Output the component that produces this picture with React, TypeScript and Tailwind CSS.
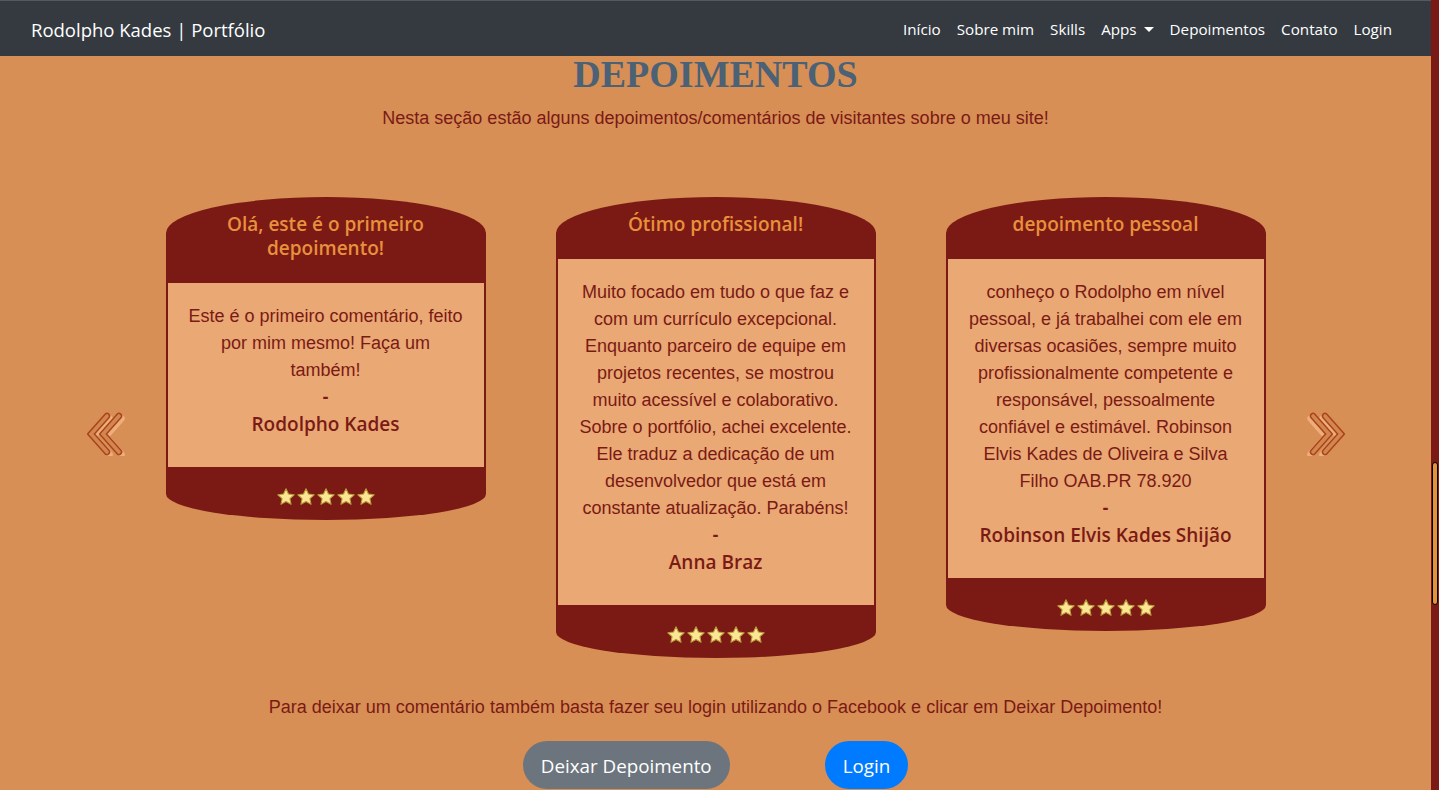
import React from "react";

const Depoimentos = [
  {
    title: "Olá, este é o primeiro depoimento!",
    text: "Este é o primeiro comentário, feito por mim mesmo! Faça um também!",
    author: "Rodolpho Kades",
  },
  {
    title: "Ótimo profissional!",
    text: "Muito focado em tudo o que faz e com um currículo excepcional. Enquanto parceiro de equipe em projetos recentes, se mostrou muito acessível e colaborativo. Sobre o portfólio, achei excelente. Ele traduz a dedicação de um desenvolvedor que está em constante atualização. Parabéns!",
    author: "Anna Braz",
  },
  {
    title: "depoimento pessoal",
    text: "conheço o Rodolpho em nível pessoal, e já trabalhei com ele em diversas ocasiões, sempre muito profissionalmente competente e responsável, pessoalmente confiável e estimável. Robinson Elvis Kades de Oliveira e Silva Filho OAB.PR 78.920",
    author: "Robinson Elvis Kades Shijão",
  },
];

const links = ["Início", "Sobre mim", "Skills", "Apps", "Depoimentos", "Contato", "Login"];

const Star = () => (
  <svg viewBox="0 0 24 24" className="w-5 h-5">
    <path
      d="M12 2.2l2.95 6.3 6.85.8-5.1 4.7 1.35 6.8L12 17.4l-6.05 3.4 1.35-6.8-5.1-4.7 6.85-.8z"
      fill="#fbe793"
      stroke="#b99a3a"
      strokeWidth="1.3"
      strokeLinejoin="round"
    />
  </svg>
);

// double chevron drawn as outlined strokes with a light shadow
const Chevrons = ({ flip }: { flip?: boolean }) => {
  const lines = ["20,4 4,22 20,40", "32,4 16,22 32,40"];
  return (
    <svg
      viewBox="0 0 44 44"
      className={flip ? "w-11 h-11 mt-3 -scale-x-100" : "w-11 h-11 mt-3"}
    >
      <g transform="translate(2.5 2.5)">
        {lines.map((p) => (
          <polyline key={p} points={p} fill="none" stroke="#eeae7a" strokeWidth="6.5" strokeLinecap="round" />
        ))}
      </g>
      {lines.map((p) => (
        <polyline key={p + "a"} points={p} fill="none" stroke="#a8431f" strokeWidth="6.5" strokeLinecap="round" />
      ))}
      {lines.map((p) => (
        <polyline key={p + "b"} points={p} fill="none" stroke="#d4874d" strokeWidth="3.6" strokeLinecap="round" />
      ))}
    </svg>
  );
};

const Card = ({ title, text, author }: { title: string; text: string; author: string }) => (
  <div className="w-[320px] flex flex-col">
    {/* top cap */}
    <div className="bg-[#7b1a15] rounded-t-[160px_36px] px-5 pt-[15px] pb-[23px] text-center">
      <h5 className="text-[19px] leading-6 font-semibold text-[#e8913d] font-['Open_Sans',sans-serif]">
        {title}
      </h5>
    </div>

    {/* body */}
    <div className="bg-[#e9a874] border-x-2 border-[#7b1a15] px-5 pt-5 pb-[29px] text-center text-[18px] leading-[27px] text-[#7b1a15] font-['Liberation_Sans',Arial,sans-serif]">
      <p>{text}</p>
      <p className="font-bold">-</p>
      <p className="font-semibold text-[19px] font-['Open_Sans',sans-serif]">{author}</p>
    </div>

    {/* bottom cap */}
    <div className="bg-[#7b1a15] rounded-b-[160px_26px] pt-5 pb-[13px] flex justify-center">
      <Star />
      <Star />
      <Star />
      <Star />
      <Star />
    </div>
  </div>
);

const App = () => {
  return (
    <div className="w-full h-[790px] flex overflow-hidden bg-[#d78f55]">
      <div className="flex-1 flex flex-col min-w-0">
        {/* navbar */}
        <nav className="relative z-10 h-14 shrink-0 bg-[#343a40] border-t border-[#55595e] pt-[2px] flex items-center justify-between px-[31px] font-['Open_Sans',sans-serif] text-white">
          <span className="text-[18.5px]">Rodolpho Kades | Portfólio</span>
          <ul className="flex items-center">
            {links.map((l) => (
              <li key={l} className="px-2 text-[15.2px] flex items-center">
                {l}
                {l === "Apps" && (
                  <span className="ml-[7px] w-0 h-0 border-x-[5px] border-x-transparent border-t-[5px] border-t-white" />
                )}
              </li>
            ))}
          </ul>
        </nav>

        {/* section */}
        <main className="flex-1 flex flex-col items-center">
          <h2 className="-mt-[3px] text-[38px] leading-[42px] font-bold text-[#4a6176] font-['Liberation_Serif',serif]">
            DEPOIMENTOS
          </h2>
          <p className="mt-[10px] text-[18px] leading-[27px] text-[#7b1a15] font-['Liberation_Sans',Arial,sans-serif]">
            Nesta seção estão alguns depoimentos/comentários de visitantes sobre o meu site!
          </p>

          {/* carousel */}
          <div className="mt-[65px] flex items-center gap-[35px]">
            <Chevrons />
            <div className="flex items-start gap-[70px]">
              {Depoimentos.map((d, i) => (
                <Card key={i} {...d} />
              ))}
            </div>
            <Chevrons flip />
          </div>

          <p className="mt-9 text-[18px] leading-[27px] text-[#7b1a15] font-['Liberation_Sans',Arial,sans-serif]">
            Para deixar um comentário também basta fazer seu login utilizando o Facebook e clicar em Deixar Depoimento!
          </p>

          <div className="mt-5 flex gap-[95px] font-['Open_Sans',sans-serif] text-[18.8px] text-white">
            <button className="h-12 px-[18px] pt-[2px] rounded-full bg-[#6c757d]">Deixar Depoimento</button>
            <button className="h-12 px-[18px] pt-[2px] rounded-full bg-[#007bff]">Login</button>
          </div>
        </main>
      </div>

      {/* scrollbar */}
      <div className="w-2 shrink-0 bg-[#7b1a15] flex flex-col">
        <div className="mt-[462px] mx-px h-[143px] rounded-[3px] bg-[#e8913d] border border-black" />
      </div>
    </div>
  );
};

export default App;
